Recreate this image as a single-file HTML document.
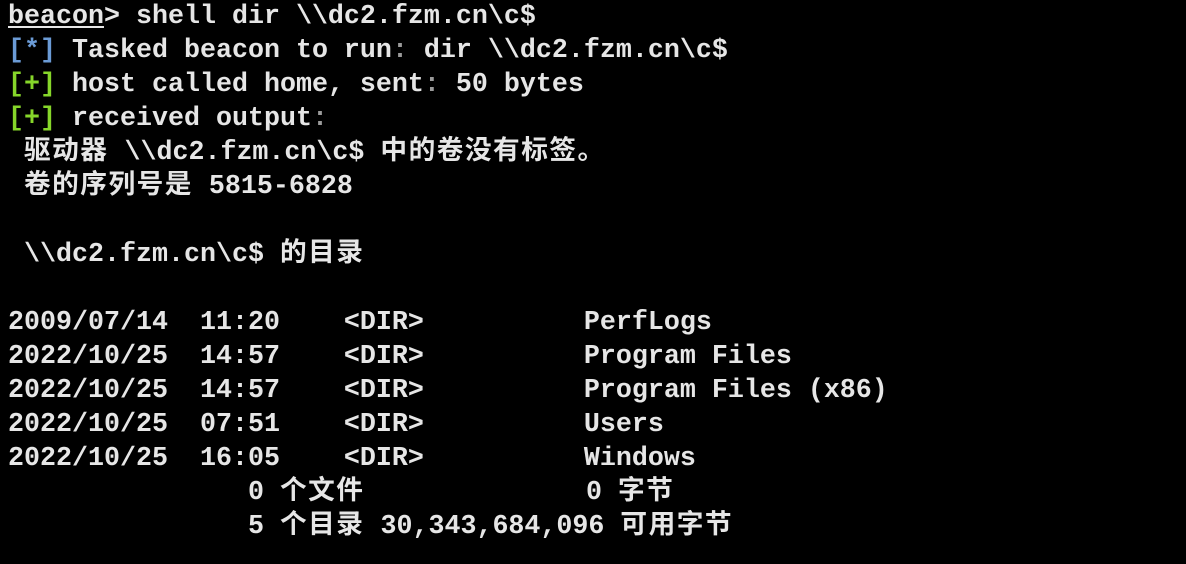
<!DOCTYPE html>
<html><head><meta charset="utf-8"><style>
html,body{margin:0;padding:0;background:#000;width:1186px;height:564px;overflow:hidden}
.t{position:absolute;left:8px;top:0px;font-family:"Liberation Mono","Noto Sans CJK SC",monospace;font-weight:bold;font-size:26.67px;line-height:34px;color:#e6e6e6}
.l{height:34px;position:relative;white-space:pre}
.b{color:#6b9bd6}.g{color:#86d62a}.d{color:#9a9a9a}
.c{letter-spacing:1.5px}
u{text-decoration:underline;text-underline-offset:3px}
.a{position:absolute;top:0}
</style></head><body><div class="t"><div class="l"><u>beacon</u>&gt; shell dir \\dc2.fzm.cn\c$</div><div class="l"><span class="b">[*]</span> Tasked beacon to run<span class="d">:</span> dir \\dc2.fzm.cn\c$</div><div class="l"><span class="g">[+]</span> host called home, sent<span class="d">:</span> 50 bytes</div><div class="l"><span class="g">[+]</span> received output<span class="d">:</span></div><div class="l"> <span class="c">驱动器</span> \\dc2.fzm.cn\c$ <span class="c">中的卷没有标签。</span></div><div class="l"> <span class="c">卷的序列号是</span> 5815-6828</div><div class="l"> </div><div class="l"> \\dc2.fzm.cn\c$ <span class="c">的目录</span></div><div class="l"> </div><div class="l">2009/07/14  11:20    &lt;DIR&gt;          PerfLogs</div><div class="l">2022/10/25  14:57    &lt;DIR&gt;          Program Files</div><div class="l">2022/10/25  14:57    &lt;DIR&gt;          Program Files (x86)</div><div class="l">2022/10/25  07:51    &lt;DIR&gt;          Users</div><div class="l">2022/10/25  16:05    &lt;DIR&gt;          Windows</div><div class="l"><span class="a" style="left:240px">0 <span class="c">个文件</span></span><span class="a" style="left:578px">0 <span class="c">字节</span></span></div><div class="l"><span class="a" style="left:240px">5 <span class="c">个目录</span> 30,343,684,096 <span class="c">可用字节</span></span></div></div></body></html>
